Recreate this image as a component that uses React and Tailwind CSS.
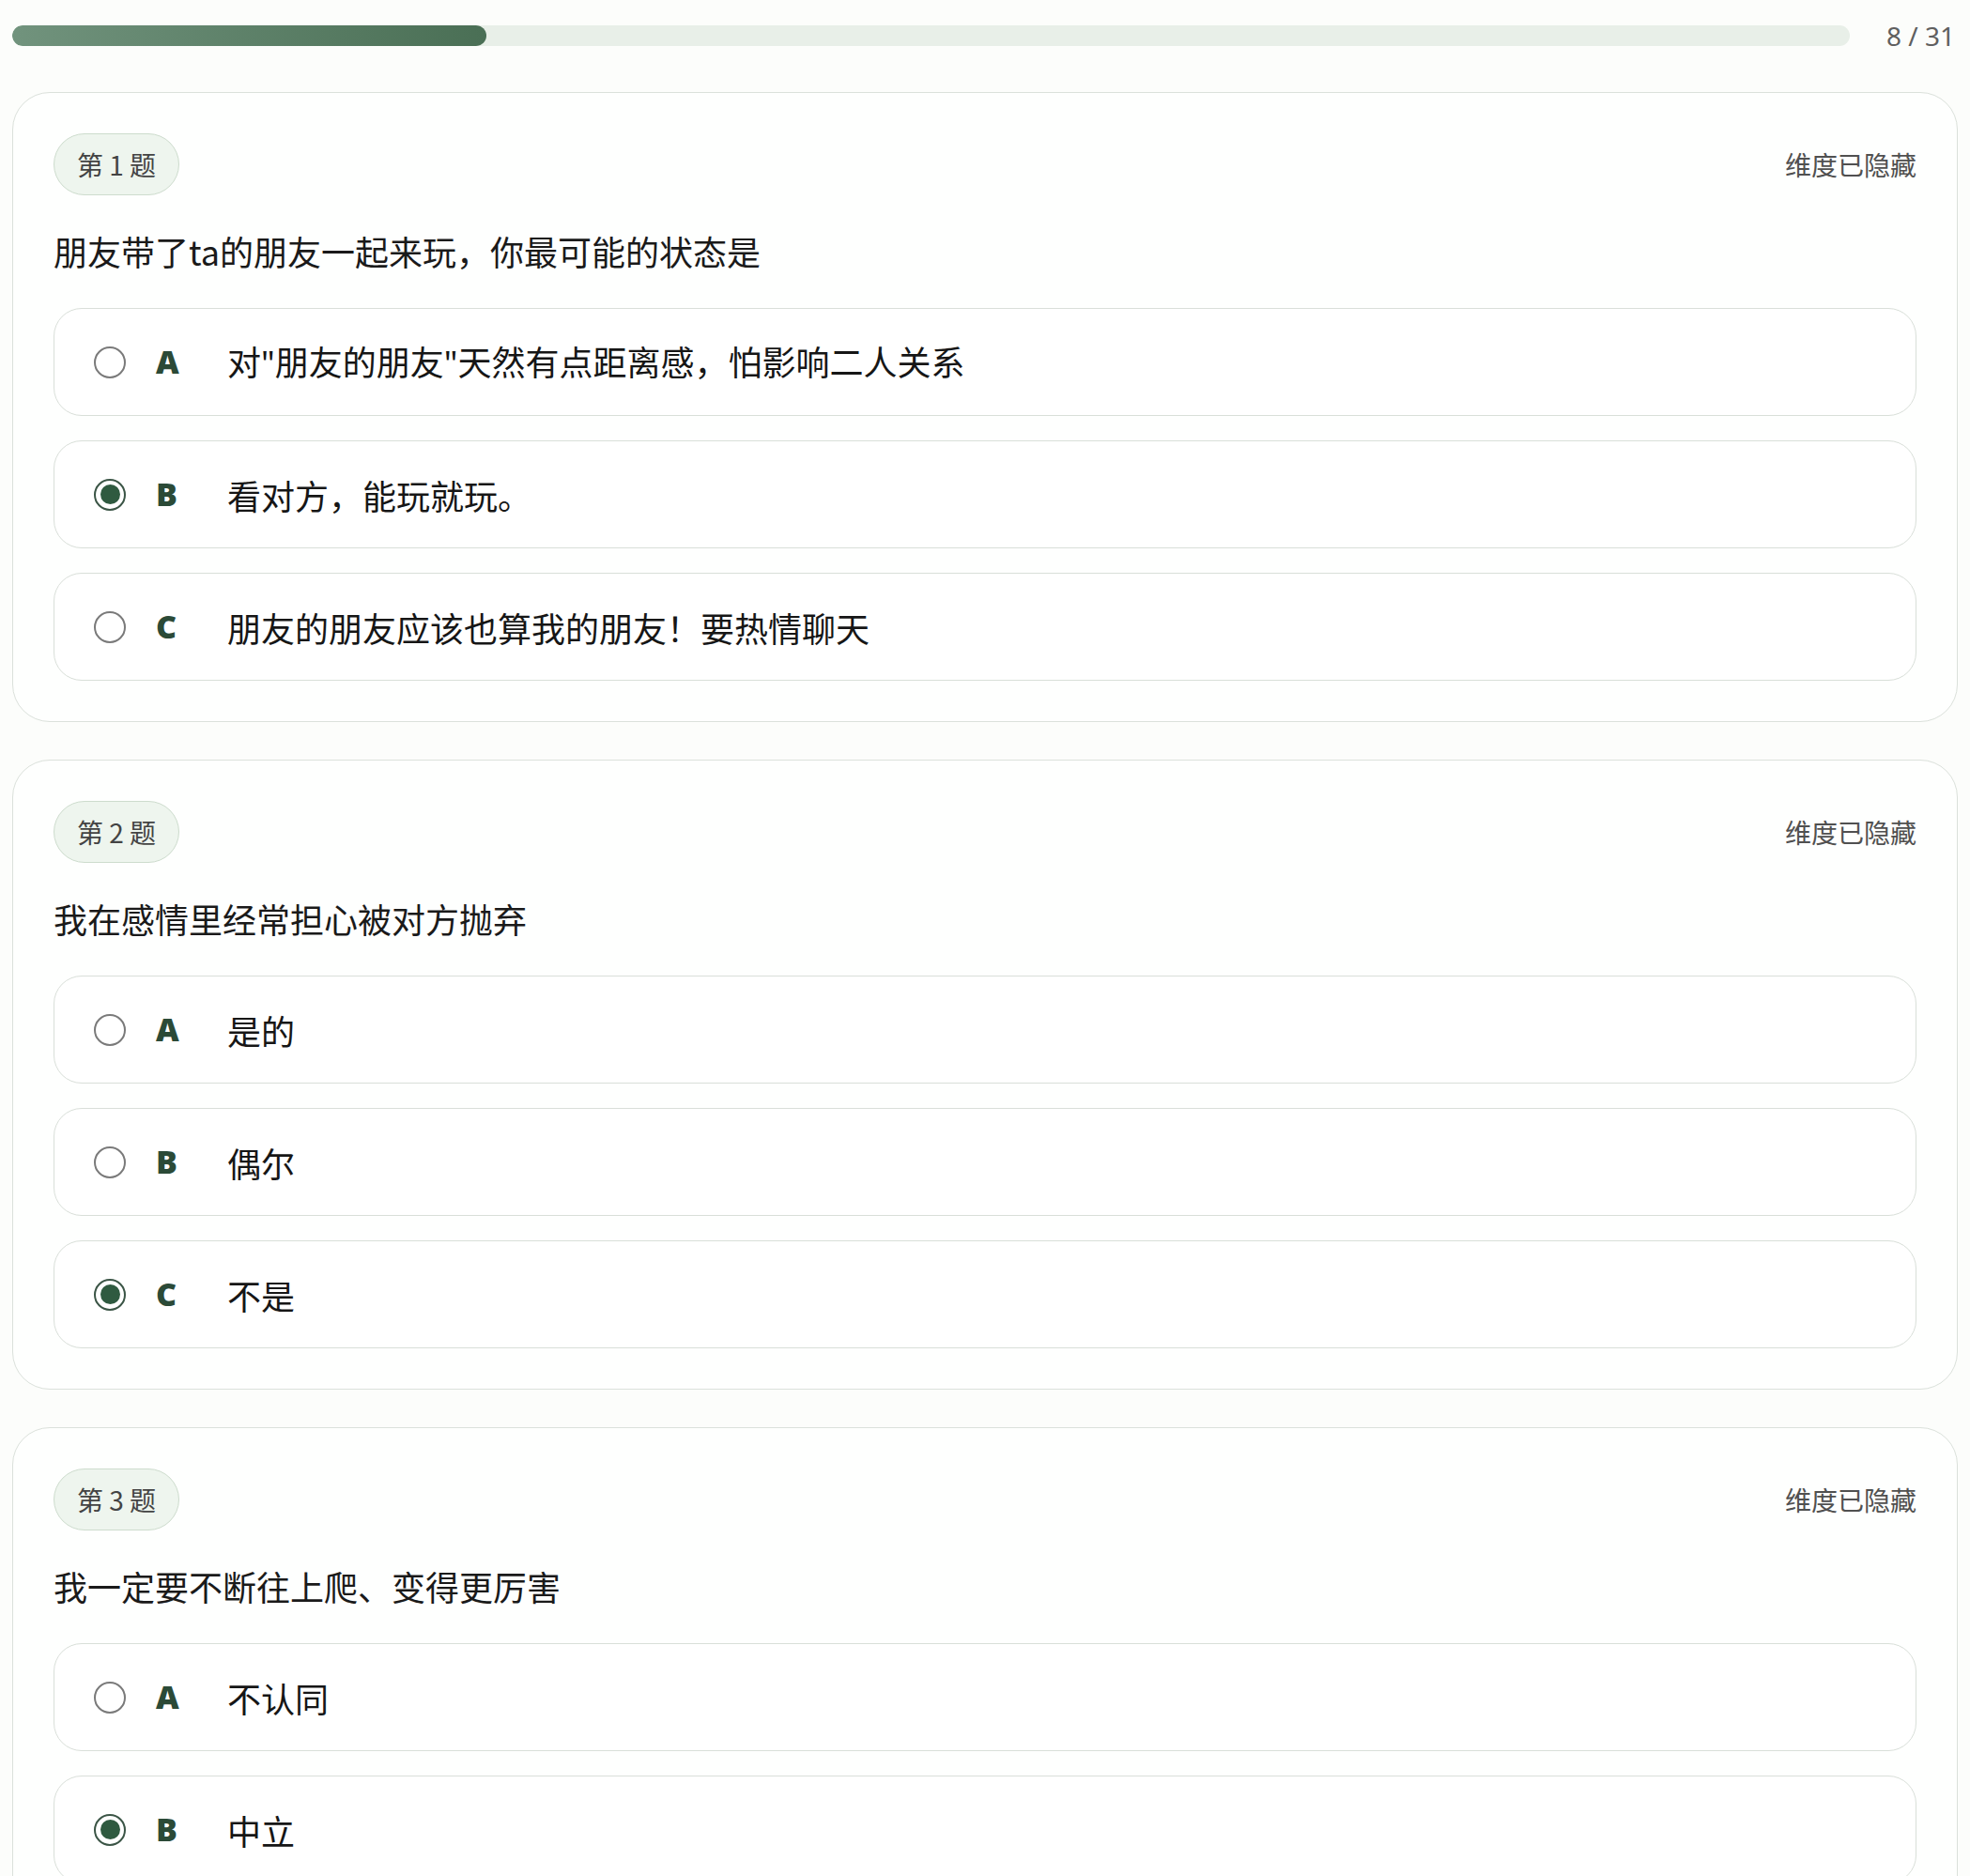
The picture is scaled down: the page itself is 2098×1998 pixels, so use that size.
import React from 'react';

const Q = ({ children }) => <span className="font-['Noto_Sans',sans-serif]">{children}</span>;

const questions = [
  {
    no: 1,
    title: '朋友带了ta的朋友一起来玩，你最可能的状态是',
    options: [
      <>对<Q>"</Q>朋友的朋友<Q>"</Q>天然有点距离感，怕影响二人关系</>,
      '看对方，能玩就玩。',
      '朋友的朋友应该也算我的朋友！要热情聊天',
    ],
    selected: 1,
  },
  {
    no: 2,
    title: '我在感情里经常担心被对方抛弃',
    options: ['是的', '偶尔', '不是'],
    selected: 2,
  },
  {
    no: 3,
    title: '我一定要不断往上爬、变得更厉害',
    options: ['不认同', '中立', '认同'],
    selected: 1,
  },
];

const letters = ['A', 'B', 'C', 'D'];

function Radio({ checked }) {
  if (checked) {
    return (
      <div className="w-[34px] h-[34px] shrink-0 rounded-full border-2 border-[#3b5546] flex items-center justify-center">
        <div className="w-[21px] h-[21px] rounded-full bg-[#2f5a40]" />
      </div>
    );
  }
  return <div className="w-[34px] h-[34px] shrink-0 rounded-full border-2 border-[#7a7a7a]" />;
}

function Option({ letter, text, checked }) {
  return (
    <div className="h-[115px] rounded-[30px] border border-[#d9dfd9] bg-white flex items-center pl-[42px]">
      <Radio checked={checked} />
      <div className="ml-[32px] w-[76px] text-[34px] font-extrabold text-[#2b4a37] font-['Open_Sans','Noto_Sans',sans-serif]">
        {letter}
      </div>
      <div className="text-[36px] text-[#161616]">{text}</div>
    </div>
  );
}

function QuestionCard({ q }) {
  return (
    <div className="rounded-[40px] border border-[#dbe1db] bg-[#fefffe] p-[43px]">
      <div className="flex items-center justify-between">
        <div className="h-[66px] px-[24px] rounded-full border border-[#cddccd] bg-[#eef5ee] flex items-center text-[28px] text-[#444]">
          第 {q.no} 题
        </div>
        <div className="text-[28px] text-[#505050]">维度已隐藏</div>
      </div>
      <div className="mt-[32px] text-[36px] leading-[54px] text-[#1a1a1a]">{q.title}</div>
      <div className="mt-[34px] flex flex-col gap-[26px]">
        {q.options.map((opt, i) => (
          <Option key={i} letter={letters[i]} text={opt} checked={q.selected === i} />
        ))}
      </div>
    </div>
  );
}

export default function App() {
  const current = 8;
  const total = 31;
  const pct = (current / total) * 100;

  return (
    <div className="h-screen overflow-hidden bg-[#fcfdfb] px-[13px] font-['Noto_Sans_CJK_SC','Noto_Sans',sans-serif]">
      {/* progress */}
      <div className="flex items-center gap-[39px] pt-[27px] pr-[3px]">
        <div className="flex-1 h-[22px] rounded-full bg-[#e8efe8] overflow-hidden">
          <div
            className="h-full rounded-full bg-linear-to-r from-[#71937d] to-[#4a6f55]"
            style={{ width: `${pct}%` }}
          />
        </div>
        <div className="text-[28px] leading-[22px] text-[#5f5f5f] font-['Noto_Sans',sans-serif]">
          {current} / {total}
        </div>
      </div>

      <div className="mt-[49px] flex flex-col gap-[40px]">
        {questions.map((q) => (
          <QuestionCard key={q.no} q={q} />
        ))}
      </div>
    </div>
  );
}
